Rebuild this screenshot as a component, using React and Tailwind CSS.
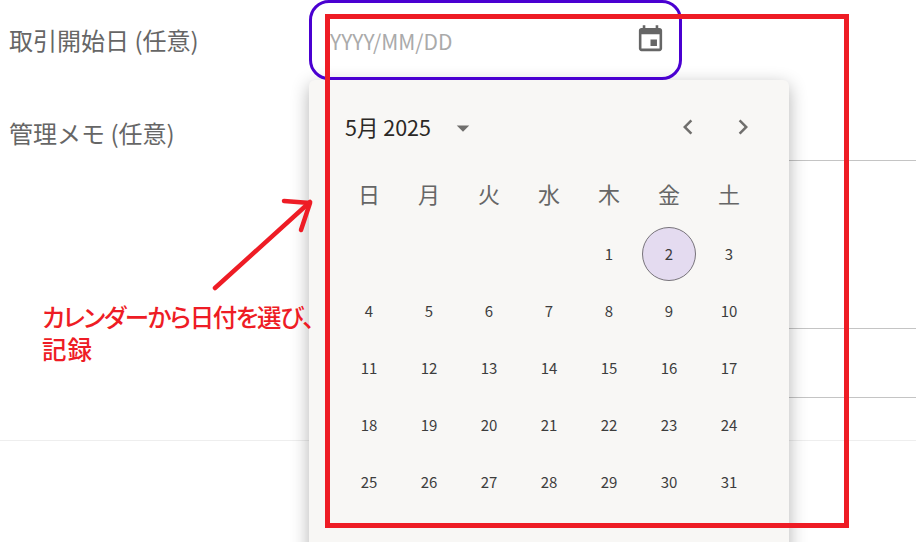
const FONT = '"Noto Sans CJK JP", "Noto Sans", sans-serif'

const WEEKDAYS = ['日', '月', '火', '水', '木', '金', '土']
const DAYS = [
  null, null, null, null, 1, 2, 3,
  4, 5, 6, 7, 8, 9, 10,
  11, 12, 13, 14, 15, 16, 17,
  18, 19, 20, 21, 22, 23, 24,
  25, 26, 27, 28, 29, 30, 31,
]

function MatIcon({ d, className }) {
  return (
    <svg viewBox="0 0 24 24" fill="currentColor" className={className}>
      <path d={d} />
    </svg>
  )
}

function DatePopover() {
  return (
    <div className="absolute left-[309px] top-[80px] w-[480px] h-[480px] rounded-md bg-[#f8f7f5] shadow-[0_5px_18px_rgba(0,0,0,0.3)]">
      {/* Month header */}
      <div className="flex items-center h-[40px] mt-[27px] pl-[36px] pr-[31px]">
        <span className="text-[21.5px] leading-none text-[#2b2825]">5月 2025</span>
        <MatIcon d="M7 10l5 5 5-5z" className="w-[30px] h-[30px] ml-[17px] mt-[1px] text-[#706f6d]" />
        <div className="flex items-center gap-[25px] ml-auto text-[#706f6d]">
          <MatIcon d="M15.41 7.41L14 6l-6 6 6 6 1.41-1.41L10.83 12z" className="w-[30px] h-[30px]" />
          <MatIcon d="M10 6L8.59 7.41 13.17 12l-4.58 4.59L10 18l6-6z" className="w-[30px] h-[30px]" />
        </div>
      </div>

      {/* Weekdays */}
      <div className="grid grid-cols-[repeat(7,60px)] px-[30px] mt-[26px] h-[40px] items-center text-center text-[22px] leading-none text-[#666666]">
        {WEEKDAYS.map(w => <span key={w}>{w}</span>)}
      </div>

      {/* Days */}
      <div className="grid grid-cols-[repeat(7,60px)] auto-rows-[57px] px-[30px] mt-[12px] text-[15px] text-[#3d3d3d]">
        {DAYS.map((day, i) => (
          <div key={i} className="flex items-center justify-center pt-[2px]">
            {day === 2 ? (
              <span className="flex items-center justify-center w-[54px] h-[54px] -mt-[2px] pt-[2px] rounded-full bg-[#e4dbf0] border border-[#77737a]">{day}</span>
            ) : day}
          </div>
        ))}
      </div>
    </div>
  )
}

export default function App() {
  return (
    <div className="relative h-[542px] w-[916px] overflow-hidden bg-white" style={{ fontFamily: FONT }}>
      {/* Form rows */}
      <div className="grid grid-cols-[309px_1fr] h-[441px] border-b border-[#eeeeee]">
        <div className="pl-[9px] pt-[24px] text-[24px] leading-[32px] text-[#666666]">
          <p>取引開始日 (任意)</p>
          <p className="mt-[61px]">管理メモ (任意)</p>
        </div>
        <div>
          <div className="h-[161px] border-b border-[#c4c4c4]" />
          <div className="h-[168px] border-b border-[#c4c4c4]" />
          <div className="h-[69px] border-b border-[#c4c4c4]" />
        </div>
      </div>

      {/* Date input */}
      <div className="absolute left-[330px] top-0 w-[336px] h-[80px] flex items-center">
        <span className="text-[21px] mt-[4px] text-[#aaaaaa]">YYYY/MM/DD</span>
        <MatIcon
          d="M17 12h-5v5h5v-5zM16 1v2H8V1H6v2H5c-1.11 0-1.99.9-1.99 2L3 19c0 1.1.89 2 2 2h14c1.1 0 2-.9 2-2V5c0-1.1-.9-2-2-2h-1V1h-2zm3 18H5V8h14v11z"
          className="w-[31px] h-[31px] ml-auto mb-[1px] text-[#666666]"
        />
      </div>

      <DatePopover />

      {/* Screenshot annotations */}
      <div className="absolute left-[309px] top-0 w-[373px] h-[80px] rounded-[20px] border-[3px] border-[#4a00d1]" />
      <div className="absolute left-[325px] top-[14px] w-[524px] h-[514px] border-[5px] border-[#ee1c25]" />
      <svg className="absolute left-0 top-0 w-[916px] h-[542px] pointer-events-none" viewBox="0 0 916 542" fill="none" stroke="#ee1c25" strokeWidth="4.5" strokeLinecap="round" strokeLinejoin="round">
        <path d="M215 288L310 202" />
        <path d="M284 201L310 203L301 230" />
      </svg>
      <div className="absolute left-[42px] top-[301px] whitespace-nowrap text-[24.5px] leading-[32px] font-medium [font-feature-settings:'palt'] text-[#ee1c25]">
        <p className="tracking-[-1.4px]">カレンダーから日付を選び、</p>
        <p className="tracking-[1px]">記録</p>
      </div>
    </div>
  )
}
